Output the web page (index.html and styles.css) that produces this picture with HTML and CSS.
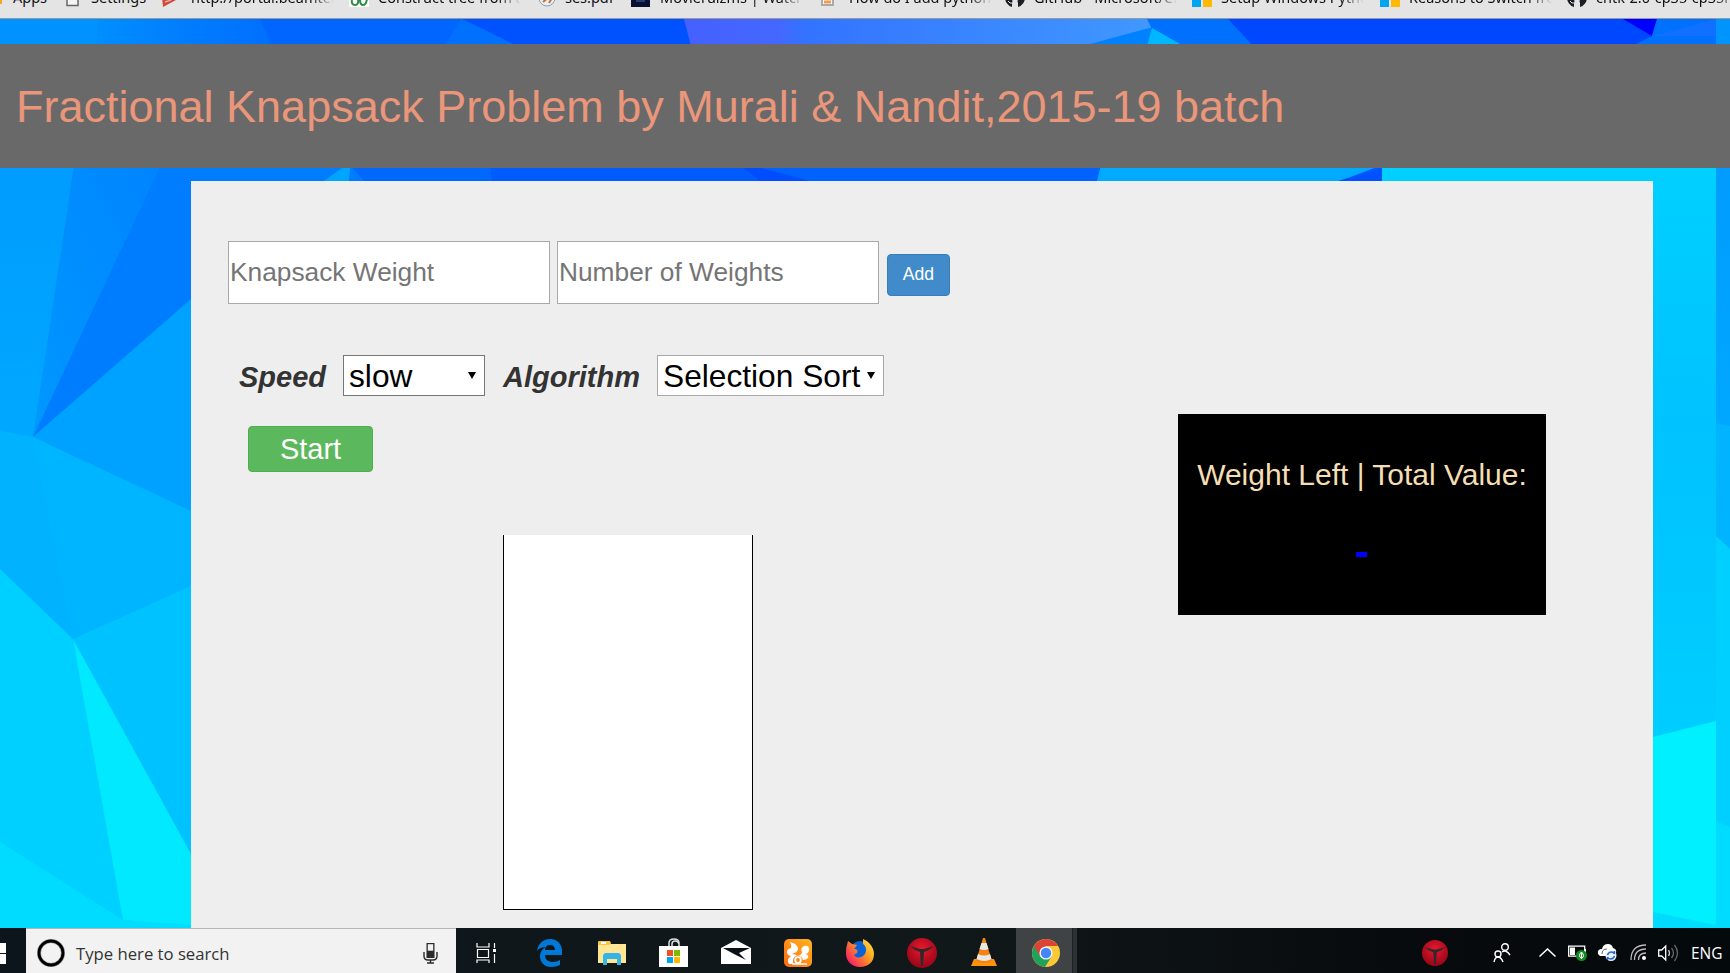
FILE: index.html
```
<!DOCTYPE html>
<html lang="en">
<head>
<meta charset="utf-8">
<title>Fractional Knapsack Problem</title>
<link rel="stylesheet" href="styles.css">
</head>
<body>
<svg class="backdrop" viewBox="0 0 1730 928" aria-hidden="true">
  <defs>
    <linearGradient id="a" x1="0" y1="0" x2="1" y2="0"><stop offset="0" stop-color="#0094ff"/><stop offset=".3" stop-color="#0070ff"/><stop offset="1" stop-color="#0052ff"/></linearGradient>
    <linearGradient id="b" x1="0" y1="0" x2="1" y2="0"><stop offset="0" stop-color="#4560ff"/><stop offset=".2" stop-color="#4468ff"/><stop offset=".25" stop-color="#3373ff"/><stop offset="1" stop-color="#4099ff"/></linearGradient>
    <linearGradient id="c" x1="0" y1="0" x2="0" y2="1"><stop offset="0" stop-color="#00d0ff"/><stop offset=".45" stop-color="#00c2ff"/><stop offset="1" stop-color="#00ceff"/></linearGradient>
    <linearGradient id="d" x1="0" y1="0" x2="0" y2="1"><stop offset="0" stop-color="#009cff"/><stop offset="1" stop-color="#00a8ff"/></linearGradient>
    <linearGradient id="e" x1="1" y1="0" x2="0" y2="1"><stop offset="0" stop-color="#0084ff"/><stop offset="1" stop-color="#0098ff"/></linearGradient>
    <linearGradient id="f" x1="0" y1="0" x2="1" y2="0"><stop offset="0" stop-color="#0090ff"/><stop offset=".5" stop-color="#007cff"/><stop offset="1" stop-color="#006cff"/></linearGradient>
  </defs>
  <rect width="1730" height="200" fill="url(#a)"/>
  <path d="M90 19H290V50H90z" fill="url(#f)"/>
  <path d="M0 19H98L96 50H0z" fill="#0093ff"/>
  <path d="M260 19H470L530 50H274z" fill="#0066ff"/>
  <path d="M442 50L461 19L520 44V50z" fill="#0070ff"/>
  <path d="M463 19H690V50H525z" fill="#0051ff"/>
  <path d="M684 19H1160V50H692z" fill="url(#b)"/>
  <path d="M1090 44L1153 27V50H1070z" fill="#0082ff"/>
  <path d="M1147 19H1232L1260 50H1180L1152 29z" fill="#0070ff"/>
  <path d="M1152 28L1182 45V50H1146z" fill="#00b8ff"/>
  <path d="M1228 19H1640L1652 38L1630 50H1257z" fill="#0048ff"/>
  <path d="M1623 19H1657L1652 36z" fill="#0000ff"/>
  <path d="M1657 19H1716V50H1625L1652 36z" fill="#0070ff"/>
  <path d="M1652 36L1716 19V36z" fill="#1070ff"/>
  <rect x="1716" y="19" width="14" height="31" fill="#0094ff"/>
  <path d="M0 165H75L34 438L0 433z" fill="url(#d)"/>
  <path d="M74 165H163L33 437z" fill="url(#e)"/>
  <path d="M161 165H345V181L191 301L33 437z" fill="#007dff"/>
  <path d="M324 181L342 168H350L349 181z" fill="#00a5ff"/>
  <path d="M350 165H1110V181H364z" fill="#0068ff"/>
  <path d="M490 165H1110V181H492z" fill="#005cff"/>
  <path d="M740 165H1105V181H760z" fill="#004dff"/>
  <path d="M810 181L750 165H1105V181z" fill="#0062ff"/>
  <path d="M1101 165H1382L1340 181H1097z" fill="#00aaff"/>
  <path d="M1382 168V181H1338z" fill="#0052ff"/>
  <path d="M191 299L33 437L191 512z" fill="#00a2ff"/>
  <path d="M0 431L33 437L191 511V588L73 641L0 572z" fill="#00b5ff"/>
  <path d="M0 431L33 437L73 639L0 572z" fill="#00b2ff"/>
  <path d="M0 569L73 639L130 928H0z" fill="#00d0ff"/>
  <path d="M73 639L191 586V858z" fill="#00c2ff"/>
  <path d="M73 639L191 854V928L123 920z" fill="#00e9ff"/>
  <path d="M0 842L123 920L191 925V928H0z" fill="#00dcff"/>
  <rect x="1382" y="168" width="334" height="13" fill="#00d0ff"/>
  <rect x="1653" y="168" width="63" height="572" fill="url(#c)"/>
  <path d="M1653 737L1716 721V928H1653z" fill="#00f0ff"/>
  <path d="M1653 912L1716 925V928H1653z" fill="#00dcff"/>
  <path d="M1716 165H1730V428L1716 425z" fill="url(#d)"/>
  <path d="M1716 423L1730 426V551L1716 538z" fill="#00b4ff"/>
  <path d="M1716 536L1730 549V829L1716 823z" fill="#00d0ff"/>
  <path d="M1716 821L1730 827V928H1716z" fill="#00dcff"/>
</svg>

<nav class="bookmarks">
  <a class="bm bm-apps"><i class="ic-apps"></i><span>Apps</span></a>
  <a class="bm"><svg class="bi" viewBox="0 0 20 20"><path d="M2 2V18.500H13V2" fill="#f5f5f5" stroke="#666" stroke-width="1.500"/></svg><span>Settings</span></a>
  <a class="bm"><svg class="bi" viewBox="0 0 20 20"><path d="M0 10h13l1 3L1 20z" fill="#cf4a3c"/><path d="M3 15l6-2" stroke="#eba79f" stroke-width="1.500"/></svg><span>http://portal.beamtek.c</span></a>
  <a class="bm"><svg class="bi" viewBox="0 0 20 20"><path d="M0 0H20V20H0z" fill="#fff"/><path d="M3 12q-1 6 3 6t3-6M11 12q0 6 3 6t4-6" fill="none" stroke="#2f8d46" stroke-width="2"/></svg><span>Construct tree from a g</span></a>
  <a class="bm"><svg class="bi" viewBox="0 0 20 20"><circle cx="8" cy="11" r="8" fill="#eee" stroke="#7ca3c4"/><path d="M4 15l6-5M10 16l3-5" stroke="#c87536" stroke-width="2"/></svg><span>ses.pdf</span></a>
  <a class="bm"><svg class="bi" viewBox="0 0 20 20"><path d="M0 0H19V20H0z" fill="#080f30"/><path d="M5 14h9" stroke="#2a3a70" stroke-width="2"/></svg><span>Movierulzms | Watch</span></a>
  <a class="bm"><svg class="bi" viewBox="0 0 20 20"><path d="M2 10V18H13V10" fill="#fff" stroke="#aaa" stroke-width="2"/><path d="M4 15h7" stroke="#f5984a" stroke-width="3"/></svg><span>How do I add python to</span></a>
  <a class="bm"><svg class="bi" viewBox="0 0 20 20"><path d="M0 10a10 10 0 0 0 7 10v-4q1-2 0-3h6q-1 1 0 3v4a10 10 0 0 0 7-10z" fill="#1b1f23"/><path d="M3 14q2 3 4 2" stroke="#e4e4e4" fill="none"/></svg><span>GitHub - Microsoft/CNTK</span></a>
  <a class="bm"><svg class="bi" viewBox="0 0 20 20"><path d="M0 11h9v9H0z" fill="#00a4ef"/><path d="M11 11h9v9h-9z" fill="#ffb900"/></svg><span>Setup Windows Python</span></a>
  <a class="bm"><svg class="bi" viewBox="0 0 20 20"><path d="M0 11h9v9H0z" fill="#00a4ef"/><path d="M11 11h9v9h-9z" fill="#ffb900"/></svg><span>Reasons to Switch from</span></a>
  <a class="bm bm-last"><svg class="bi" viewBox="0 0 20 20"><path d="M0 10a10 10 0 0 0 7 10v-4q1-2 0-3h6q-1 1 0 3v4a10 10 0 0 0 7-10z" fill="#1b1f23"/><path d="M3 14q2 3 4 2" stroke="#e4e4e4" fill="none"/></svg><span>cntk-2.0-cp35-cp35m</span></a>
</nav>

<header class="banner"><h1>Fractional Knapsack Problem by Murali &amp; Nandit,2015-19 batch</h1></header>

<main class="panel">
  <section class="controls">
    <form class="row inputs">
      <input type="text" placeholder="Knapsack Weight">
      <input type="text" placeholder="Number of Weights">
      <button type="button" class="btn add">Add</button>
    </form>
    <div class="row options">
      <label class="speed-label">Speed</label>
      <div class="select speed">slow<i></i></div>
      <label class="algo-label">Algorithm</label>
      <div class="select algo">Selection Sort<i></i></div>
    </div>
    <button type="button" class="btn start">Start</button>
    <div class="sack"></div>
  </section>
  <aside class="score">
    <p class="score-title">Weight Left | Total Value:</p>
    <p class="score-value">-</p>
  </aside>
</main>

<footer class="taskbar">
  <div class="winlogo"><i></i><i></i></div>
  <div class="search">
    <svg width="28" height="28" viewBox="0 0 28 28"><circle cx="14" cy="14" r="12" fill="none" stroke="#999" stroke-width="4"/><circle cx="14" cy="14" r="12" fill="none" stroke="#000" stroke-width="2.800"/></svg>
    <span>Type here to search</span>
    <svg class="mic" width="15" height="21" viewBox="0 0 15 21"><path d="M3.500 0h8v15h-8z" fill="#2b2b2b"/><path d="M4.800 1.200h5.400v6.500H4.800z" fill="#f2f2f2"/><path d="M1 9v4q0 4 4 4h5q4 0 4-4V9M7.500 17v3M4 20h7" fill="none" stroke="#2b2b2b" stroke-width="1.400"/></svg>
  </div>
  <div class="apps">
    <div class="app"><svg width="21" height="20" viewBox="0 0 21 20"><path d="M1 0v4h12V0M1 20v-3h12v3M1.500 6.500h11v8h-11zM18.500 0v5M18.500 11v9" fill="none" stroke="#fff" stroke-width="1.200"/><path d="M17 6h3v3h-3z" fill="#fff"/></svg></div>
    <div class="app"><svg width="26" height="28" viewBox="0 0 26 28"><path d="M0 12C1 4 7 0 13 0c8 0 12 6 12 12v4H8c0 5 4 7 8 7 3 0 5-1 7-2v5c-3 1-5 2-9 2C7 28 3 23 3 17c0-4 2-7 6-9-4 0-7 1-9 4zM8 11h10c0-3-2-5-5-5s-5 2-5 5z" fill="#0078d7" fill-rule="evenodd"/></svg></div>
    <div class="app"><svg width="28" height="24" viewBox="0 0 28 24"><path d="M0 1h11l2 2h15v19H0z" fill="#ffe694"/><path d="M0 1q0-1 1-1h11l1 2-2 2H0z" fill="#f8c63c"/><path d="M3 1h5v2H3z" fill="#fff"/><path d="M5 24V14l2-2h14l2 2v10h-4v-6H9v6z" fill="#36b4e6"/></svg></div>
    <div class="app"><svg width="30" height="30" viewBox="0 0 30 30"><path d="M10 9V5q0-4 5-4t5 4v4M13 9V6q0-3 3-3t4 3" fill="none" stroke="#ddd" stroke-width="1.500"/><path d="M0 8h29v21H0z" fill="#fff"/><path d="M8 12h6v6H8z" fill="#f25022"/><path d="M15 12h6v6h-6z" fill="#7fba00"/><path d="M8 19h6v6H8z" fill="#00a4ef"/><path d="M15 19h6v6h-6z" fill="#ffb900"/></svg></div>
    <div class="app"><svg width="30" height="26" viewBox="0 0 30 26"><path d="M0 8L15 0l15 8v16H0z" fill="#fff"/><path d="M2 8h27l-11 5 7 7L13 14z" fill="#0b1217"/></svg></div>
    <div class="app"><svg width="28" height="28" viewBox="0 0 28 28"><defs><linearGradient id="uc" x1="0" y1="1" x2="1" y2="0"><stop stop-color="#ff6a13"/><stop offset="1" stop-color="#ffb51f"/></linearGradient></defs><rect width="28" height="28" rx="5" fill="url(#uc)"/><path d="M6 3q5 1 7 4 2 3 0 5-1 2-3 2l-2 1q4 0 5 2 5-1 5-4-2-4 2-6 4-1 5 2 1 4-3 6 3 1 2 4-2 2-5 2-1-4-5-4-5 0-5 5 0 2 1 3H5q-3-5 2-8-4-1-4-4t4-4q1-3-1-6z" fill="#fff"/><circle cx="14" cy="21" r="2.800" fill="none" stroke="#fff" stroke-width="1.800"/><path d="M8 25h15" stroke="#fff" stroke-width="1.500"/></svg></div>
    <div class="app"><svg width="28" height="28" viewBox="0 0 28 28"><defs><linearGradient id="ff" x1="1" y1="0" x2="0" y2=".8"><stop stop-color="#fff044"/><stop offset=".45" stop-color="#ff9a1f"/><stop offset="1" stop-color="#f5146a"/></linearGradient></defs><circle cx="14" cy="12" r="10" fill="#0a62d6"/><path d="M1 6l1-4 4 3 5 1-3 4c3 0 4 1 3 4l-3 2c3 4 8 3 11-1 2-4 1-8-2-10V0c7 3 11 9 11 15 0 8-6 13-14 13S0 22 0 15c0-4 0-6 1-9z" fill="url(#ff)"/></svg></div>
    <div class="app"><svg width="30" height="30" viewBox="0 0 30 30"><defs><radialGradient id="red" cx=".5" cy=".35" r=".6"><stop stop-color="#e8182d"/><stop offset="1" stop-color="#9c0719"/></radialGradient></defs><circle cx="15" cy="15" r="15" fill="url(#red)"/><path d="M3 8l10 3h4l10-3-5 4-5 2-1 14h-2l-1-14-5-2z" fill="#30282a"/></svg></div>
    <div class="app"><svg width="26" height="29" viewBox="0 0 26 29"><path d="M3 21h20l3 7H0z" fill="#ff9208"/><path d="M12 0h2l7 23q-8 4-16 0z" fill="#f48312"/><path d="M10.500 5h5l2 6q-4 2-9 0zM7 16q6 3 12 0l1.500 5q-7 4-15 0z" fill="#e8e8e8"/></svg></div>
    <div class="app active"><svg width="28" height="28" viewBox="0 0 28 28"><circle cx="14" cy="14" r="14" fill="#fbc934"/><path d="M14 14L1.900 7A14 14 0 0 0 13 28l7-11z" fill="#1fa35b"/><path d="M1.900 7a14 14 0 0 1 24.200 0H14l-6 10z" fill="#dd4236"/><circle cx="14" cy="14" r="6.600" fill="#f4f4f4"/><circle cx="14" cy="14" r="5.200" fill="#4486f5"/></svg></div>
    <div class="stack"></div>
  </div>
  <div class="tray">
    <svg class="t1" width="26" height="26" viewBox="0 0 30 30"><circle cx="15" cy="15" r="15" fill="url(#red)"/><path d="M3 8l10 3h4l10-3-5 4-5 2-1 14h-2l-1-14-5-2z" fill="#30282a"/></svg>
    <svg class="t2" width="18" height="20" viewBox="0 0 18 20"><g fill="none" stroke="#fff" stroke-width="1.400"><circle cx="12" cy="4" r="3.300"/><circle cx="5" cy="11" r="3"/><path d="M9 9q4-3 8 3M1 19q1-5 4-5t5 5"/></g></svg>
    <svg class="t3" width="17" height="9" viewBox="0 0 17 9"><path d="M.5 8.500l8-7.500 8 7.500" fill="none" stroke="#fff" stroke-width="1.500"/></svg>
    <svg class="t4" width="20" height="16" viewBox="0 0 20 16"><path d="M.7 1.200h16v10H.7z" fill="none" stroke="#fff" stroke-width="1.300"/><path d="M2 2.500h5v7.500H2zM17 4h1v4h-1z" fill="#fff"/><circle cx="13.500" cy="10.500" r="5.500" fill="#138a20"/><path d="M13.500 7q4 4 0 6.500q-4-2.500 0-6.500v7" fill="none" stroke="#fff"/></svg>
    <svg class="t5" width="21" height="17" viewBox="0 0 21 17"><path d="M1 10q-1-5 4-5 1-5 6-5 4 0 5 4 4 1 3 5v3H3z" fill="#fff"/><path d="M5 10q0-5 5-5" fill="none" stroke="#59636a"/><circle cx="14" cy="11.500" r="5.500" fill="#e9f1ff"/><path d="M10.500 11q1-3 4-3 2 0 3 2V7M17.500 12q-1 3-4 3-2 0-3-2v3" fill="none" stroke="#2867cc" stroke-width="1.500"/></svg>
    <svg class="t6" width="17" height="17" viewBox="0 0 17 17"><g fill="none" stroke="#bbb" stroke-width="1.300"><path d="M1 16Q1 1 16 1M4.500 16Q4.500 5 16 5M8.500 16Q8.500 9 16 9"/></g><circle cx="14" cy="14" r="2" fill="#fff"/></svg>
    <svg class="t7" width="21" height="18" viewBox="0 0 21 18"><path d="M.7 6h3l4-4v14l-4-4h-3z" fill="none" stroke="#fff" stroke-width="1.300"/><g fill="none" stroke-width="1.300"><path d="M10.500 6q2 3 0 6" stroke="#ccc"/><path d="M13.500 4q4 5 0 10M16.500 1q6 8 0 16" stroke="#666"/></g></svg>
    <span>ENG</span>
  </div>
</footer>
</body>
</html>
```
FILE: styles.css
```
* { box-sizing: border-box; }
body {
  margin: 0;
  width: 1730px;
  height: 973px;
  overflow: hidden;
  display: flex;
  flex-direction: column;
  font-family: "Liberation Sans", Arial, sans-serif;
  background: #00a2ff;
}
svg { display: block; flex: none; }
.backdrop { position: absolute; top: 0; left: 0; width: 1730px; height: 928px; z-index: -1; }

.bookmarks {
  height: 19px;
  flex: none;
  display: grid;
  grid-template-columns: 65px 97px 187px 190px 92px 189px 185px 187px 188px 187px 163px;
  background: #e4e4e4;
  border-bottom: 1px solid #999;
  overflow: hidden;
}
.bm { display: flex; gap: 9px; margin-top: -13px; height: 30px; color: #111; min-width: 0; }
.bm span {
  font: 14.500px/20px "Noto Sans", sans-serif;
  white-space: nowrap;
  overflow: hidden;
  width: 143px;
  flex: none;
  -webkit-mask-image: linear-gradient(to right, #000 84%, transparent);
  mask-image: linear-gradient(to right, #000 84%, transparent);
}
.bi { width: 20px; height: 20px; }
.ic-apps { width: 4px; height: 17px; background: #f5a623; flex: none; margin-left: -2px; }
.bm-apps { gap: 11px; }
.bm-apps span { width: 50px; -webkit-mask-image: none; mask-image: none; }
.bm:nth-child(2) { gap: 6px; }
.bm:nth-child(2) span { width: 65px; -webkit-mask-image: none; mask-image: none; }
.bm:nth-child(5) span { width: 55px; -webkit-mask-image: none; mask-image: none; }
.bm:nth-child(5) { gap: 6px; }

.banner {
  height: 124px;
  flex: none;
  margin-top: 25px;
  padding: 36px 16px 0;
  background: #696969;
}
.banner h1 { margin: 0; font-size: 45px; line-height: 54px; font-weight: 400; color: #e9967a; white-space: nowrap; }

.panel {
  flex: 1;
  min-height: 0;
  margin: 13px 77px 0 191px;
  padding: 60px 107px 0 37px;
  display: flex;
  justify-content: space-between;
  align-items: flex-start;
  background: #eee;
}
.row { display: flex; }
.inputs { gap: 7px; }
.inputs input {
  width: 322px;
  height: 63px;
  border: 1px solid #a9a9a9;
  padding: 1px;
  font: 26.300px "Liberation Sans", Arial, sans-serif;
  background: #fff;
}
.inputs input::placeholder { color: #757575; opacity: 1; }
.btn { font-family: "Liberation Sans", Arial, sans-serif; color: #fff; border-radius: 4px; padding: 0; }
.add { width: 63px; height: 42px; margin: 13px 0 0 1px; padding-bottom: 2px; font-size: 17.600px; background: #428bca; border: 1px solid #357ebd; }
.options { margin-top: 51px; height: 41px; padding-left: 11px; }
.options label { font-size: 29px; line-height: 44px; font-weight: 700; font-style: italic; color: #333; }
.speed-label { width: 104px; }
.algo-label { width: 154px; margin-left: 18px; }
.select {
  display: flex;
  align-items: center;
  justify-content: space-between;
  height: 41px;
  padding: 1px 8px 0 5px;
  background: #fff;
  border: 1px solid #a9a9a9;
  font-size: 31.700px;
  color: #000;
  white-space: nowrap;
}
.select i { border: 4px solid transparent; border-top: 7px solid #000; border-bottom: 0; margin-bottom: 2px; }
.speed { width: 142px; border-color: #767676; }
.algo { width: 227px; }
.start { display: block; width: 125px; height: 46px; margin: 30px 0 0 20px; font-size: 29px; background: #5cb85c; border: 1px solid #4cae4c; }
.sack { width: 250px; height: 375px; margin: 63px 0 0 275px; background: #fff; border: 1px solid #000; border-top: 0; }

.score {
  width: 368px;
  height: 201px;
  margin-top: 173px;
  background: #000;
  text-align: center;
}
.score p { margin: 0; white-space: nowrap; }
.score-title { padding-top: 43px; font-size: 30px; line-height: 36px; color: #f5deb3; }
.score-value { padding-top: 34px; font-size: 43px; line-height: 48px; color: #00f; font-weight: 700; }

.taskbar { height: 45px; flex: none; display: flex; background: linear-gradient(90deg, #0b151b, #11181a 55%, #080b0e 80%, #04090c); color: #fff; }
.winlogo { width: 26px; display: flex; flex-direction: column; gap: 1px; padding-top: 15px; }
.winlogo i { width: 6px; height: 10px; background: #fff; }
.search {
  width: 430px;
  display: flex;
  align-items: center;
  padding: 4px 18px 0 11px;
  gap: 11px;
  background: #f2f2f2;
  border-top: 1px solid #b5b5b5;
  color: #333;
  font: 16.700px "Open Sans", "Noto Sans", sans-serif;
}
.mic { margin-left: auto; }
.apps { display: flex; padding-left: 2px; }
.app { width: 62px; padding-top: 4px; display: flex; align-items: center; justify-content: center; }
.app:first-child { width: 57px; }
.app:nth-child(2) { width: 63px; margin-left: 3px; }
.app.active { width: 56px; margin-left: 1px; padding-left: 4px; background: #3f4345; }
.stack { width: 5px; background: #2d3133; border-left: 1px solid #1b2022; }
.tray { margin-left: auto; display: flex; align-items: center; padding: 4px 10px 0 0; font: 16px/20px "Open Sans", "Noto Sans", sans-serif; }
.tray span { width: 29px; font-size: 15.500px; margin-right: 0; }
.t1 { margin-right: 45px; }
.t2 { margin-right: 28px; }
.t3 { margin-right: 12px; }
.t4 { margin-right: 9px; }
.t5 { margin-right: 12px; }
.t6 { margin-right: 11px; }
.t7 { margin-right: 12px; }
```
